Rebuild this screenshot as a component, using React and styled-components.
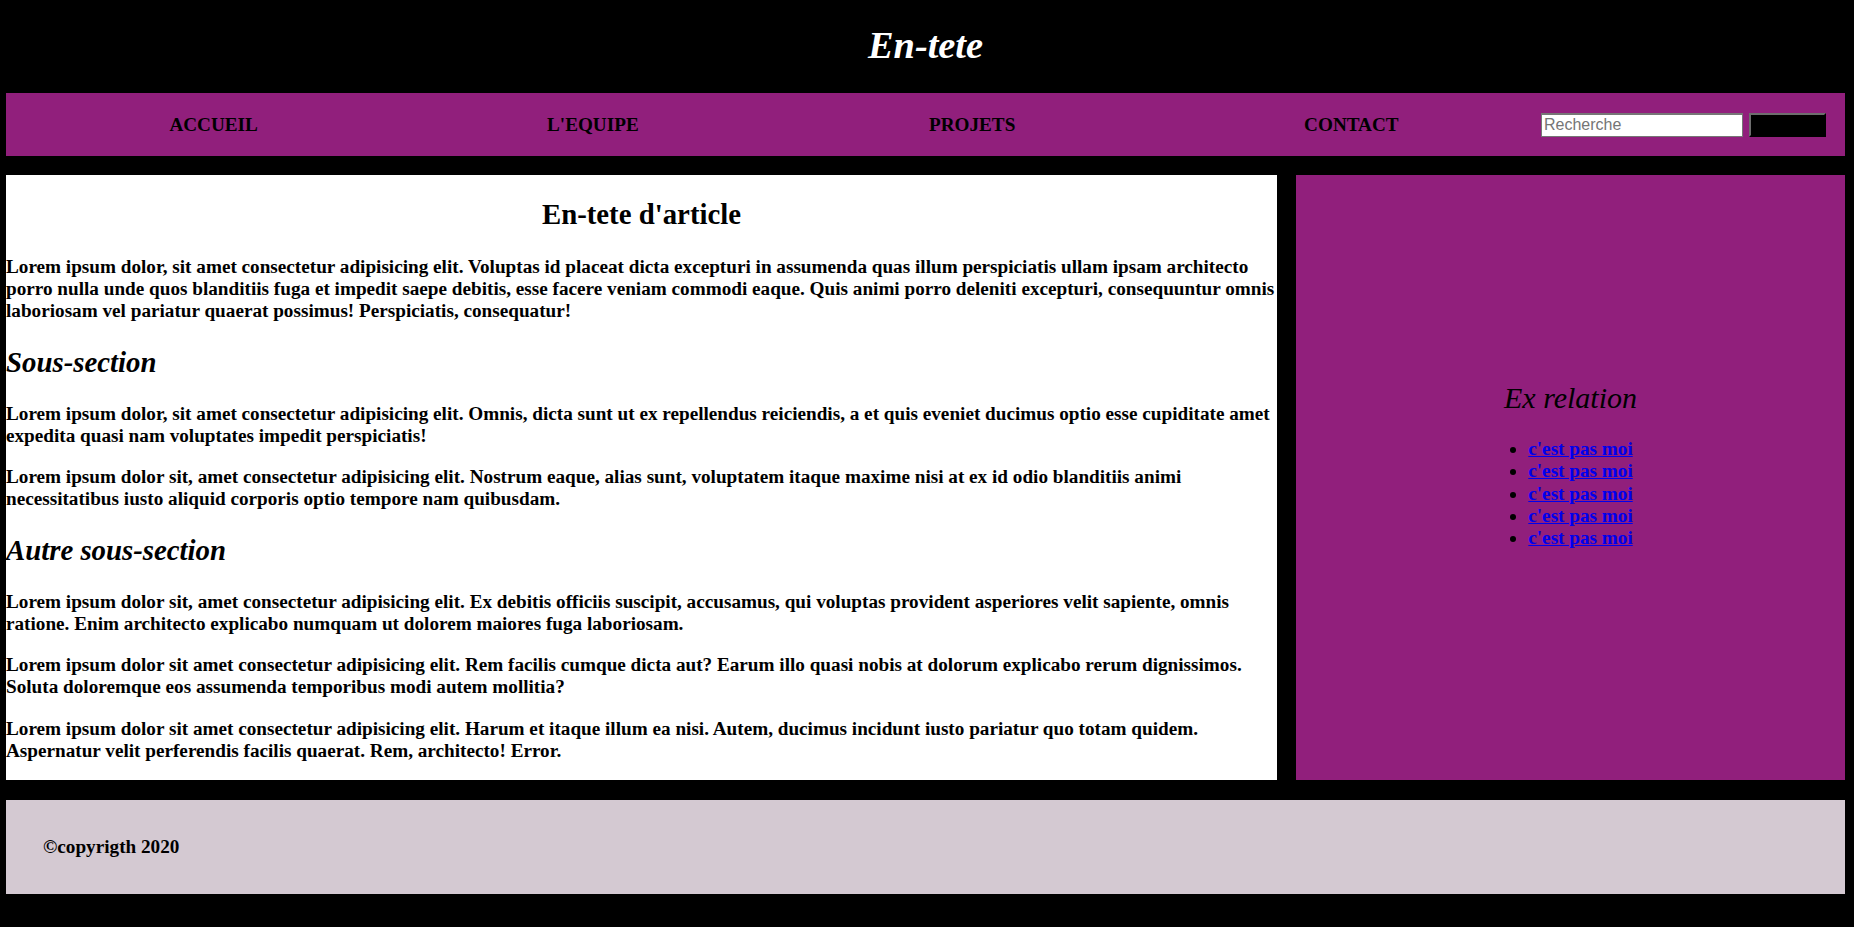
import styled, { createGlobalStyle } from "styled-components";

const GlobalStyle = createGlobalStyle`
  html, body {
    margin: 0;
    padding: 0;
    background: #000;
  }
  body {
    font-family: "Liberation Serif", "Times New Roman", serif;
    font-size: 19.2px;
    font-weight: bold;
  }
`;

const Page = styled.div`
  min-height: 100vh;
  background: #000;
  padding: 0 9px 0 6px;
  display: flex;
  flex-direction: column;
`;

const Header = styled.header`
  box-sizing: border-box;
  height: 93px;
  padding-bottom: 4px;
  display: flex;
  align-items: center;
  justify-content: center;
`;

const Title = styled.h1`
  margin: 0;
  color: #fff;
  font-size: 38.4px;
  font-style: italic;
  font-weight: bold;
`;

const Nav = styled.nav`
  height: 63px;
  background: #911f7c;
  display: flex;
  align-items: center;
  padding: 0 19px 0 18px;
`;

const NavList = styled.ul`
  flex: 1;
  display: flex;
  margin: 0;
  padding: 0;
  list-style: none;
`;

const NavItem = styled.li`
  flex: 1;
  text-align: center;
`;

const NavLink = styled.a`
  color: #000;
  text-decoration: none;
  text-transform: uppercase;
  font-size: 19.2px;
`;

const SearchForm = styled.form`
  display: flex;
  align-items: center;
  gap: 6px;
`;

const SearchInput = styled.input`
  box-sizing: border-box;
  width: 202px;
  height: 24px;
  padding: 1px 2px;
  border: 1px solid #767676;
  border-top-width: 2px;
  background: #fff;
  font-family: "Liberation Sans", Arial, sans-serif;
  font-size: 16px;
  font-weight: normal;
  &::placeholder {
    color: #757575;
  }
`;

const SearchButton = styled.button`
  box-sizing: border-box;
  width: 77px;
  height: 24px;
  background: #000;
  border: 2px solid;
  border-color: #6e6e6e #000 #000 #6e6e6e;
`;

const Main = styled.main`
  display: grid;
  grid-template-columns: 1fr 549px;
  gap: 19px;
  margin: 19px 0 20px;
`;

const Article = styled.article`
  background: #fff;
  color: #000;
  display: flow-root;
`;

const ArticleTitle = styled.h2`
  font-size: 28.8px;
  text-align: center;
  margin: 23px 0 25px;
`;

const SubTitle = styled.h3`
  font-size: 28.8px;
  font-style: italic;
  margin: 24px 0;
`;

const Text = styled.p`
  margin: 19.2px 0;
  &:last-child {
    margin-bottom: 18px;
  }
`;

const Aside = styled.aside`
  background: #911f7c;
  display: flex;
  flex-direction: column;
  align-items: center;
  justify-content: center;
  padding-bottom: 24px;
`;

const AsideTitle = styled.h2`
  font-size: 30px;
  font-style: italic;
  font-weight: normal;
  margin: 0 0 23px;
`;

const LinkList = styled.ul`
  margin: 0;
  padding-left: 20px;
`;

const LinkItem = styled.li`
  color: #000;
  line-height: 22.2px;
`;

const ExLink = styled.a`
  color: #0000ee;
  text-decoration: underline;
`;

const Footer = styled.footer`
  height: 94px;
  background: #d4c9d2;
  display: flex;
  align-items: center;
  padding-left: 37px;
`;

const paragraphs1 = [
  "Lorem ipsum dolor, sit amet consectetur adipisicing elit. Voluptas id placeat dicta excepturi in assumenda quas illum perspiciatis ullam ipsam architecto porro nulla unde quos blanditiis fuga et impedit saepe debitis, esse facere veniam commodi eaque. Quis animi porro deleniti excepturi, consequuntur omnis laboriosam vel pariatur quaerat possimus! Perspiciatis, consequatur!",
];

const paragraphs2 = [
  "Lorem ipsum dolor, sit amet consectetur adipisicing elit. Omnis, dicta sunt ut ex repellendus reiciendis, a et quis eveniet ducimus optio esse cupiditate amet expedita quasi nam voluptates impedit perspiciatis!",
  "Lorem ipsum dolor sit, amet consectetur adipisicing elit. Nostrum eaque, alias sunt, voluptatem itaque maxime nisi at ex id odio blanditiis animi necessitatibus iusto aliquid corporis optio tempore nam quibusdam.",
];

const paragraphs3 = [
  "Lorem ipsum dolor sit, amet consectetur adipisicing elit. Ex debitis officiis suscipit, accusamus, qui voluptas provident asperiores velit sapiente, omnis ratione. Enim architecto explicabo numquam ut dolorem maiores fuga laboriosam.",
  "Lorem ipsum dolor sit amet consectetur adipisicing elit. Rem facilis cumque dicta aut? Earum illo quasi nobis at dolorum explicabo rerum dignissimos. Soluta doloremque eos assumenda temporibus modi autem mollitia?",
  "Lorem ipsum dolor sit amet consectetur adipisicing elit. Harum et itaque illum ea nisi. Autem, ducimus incidunt iusto pariatur quo totam quidem. Aspernatur velit perferendis facilis quaerat. Rem, architecto! Error.",
];

const menu = ["Accueil", "L'equipe", "Projets", "Contact"];

export default function App() {
  return (
    <>
      <GlobalStyle />
      <Page>
        <Header>
          <Title>En-tete</Title>
        </Header>
        <Nav>
          <NavList>
            {menu.map((m) => (
              <NavItem key={m}>
                <NavLink href="#">{m}</NavLink>
              </NavItem>
            ))}
          </NavList>
          <SearchForm onSubmit={(e) => e.preventDefault()}>
            <SearchInput type="text" placeholder="Recherche" />
            <SearchButton type="submit"></SearchButton>
          </SearchForm>
        </Nav>
        <Main>
          <Article>
            <ArticleTitle>En-tete d'article</ArticleTitle>
            {paragraphs1.map((p, i) => (
              <Text key={i}>{p}</Text>
            ))}
            <SubTitle>Sous-section</SubTitle>
            {paragraphs2.map((p, i) => (
              <Text key={i}>{p}</Text>
            ))}
            <SubTitle>Autre sous-section</SubTitle>
            {paragraphs3.map((p, i) => (
              <Text key={i}>{p}</Text>
            ))}
          </Article>
          <Aside>
            <AsideTitle>Ex relation</AsideTitle>
            <LinkList>
              {[0, 1, 2, 3, 4].map((i) => (
                <LinkItem key={i}>
                  <ExLink href="#">c'est pas moi</ExLink>
                </LinkItem>
              ))}
            </LinkList>
          </Aside>
        </Main>
        <Footer>©copyrigth 2020</Footer>
      </Page>
    </>
  );
}
